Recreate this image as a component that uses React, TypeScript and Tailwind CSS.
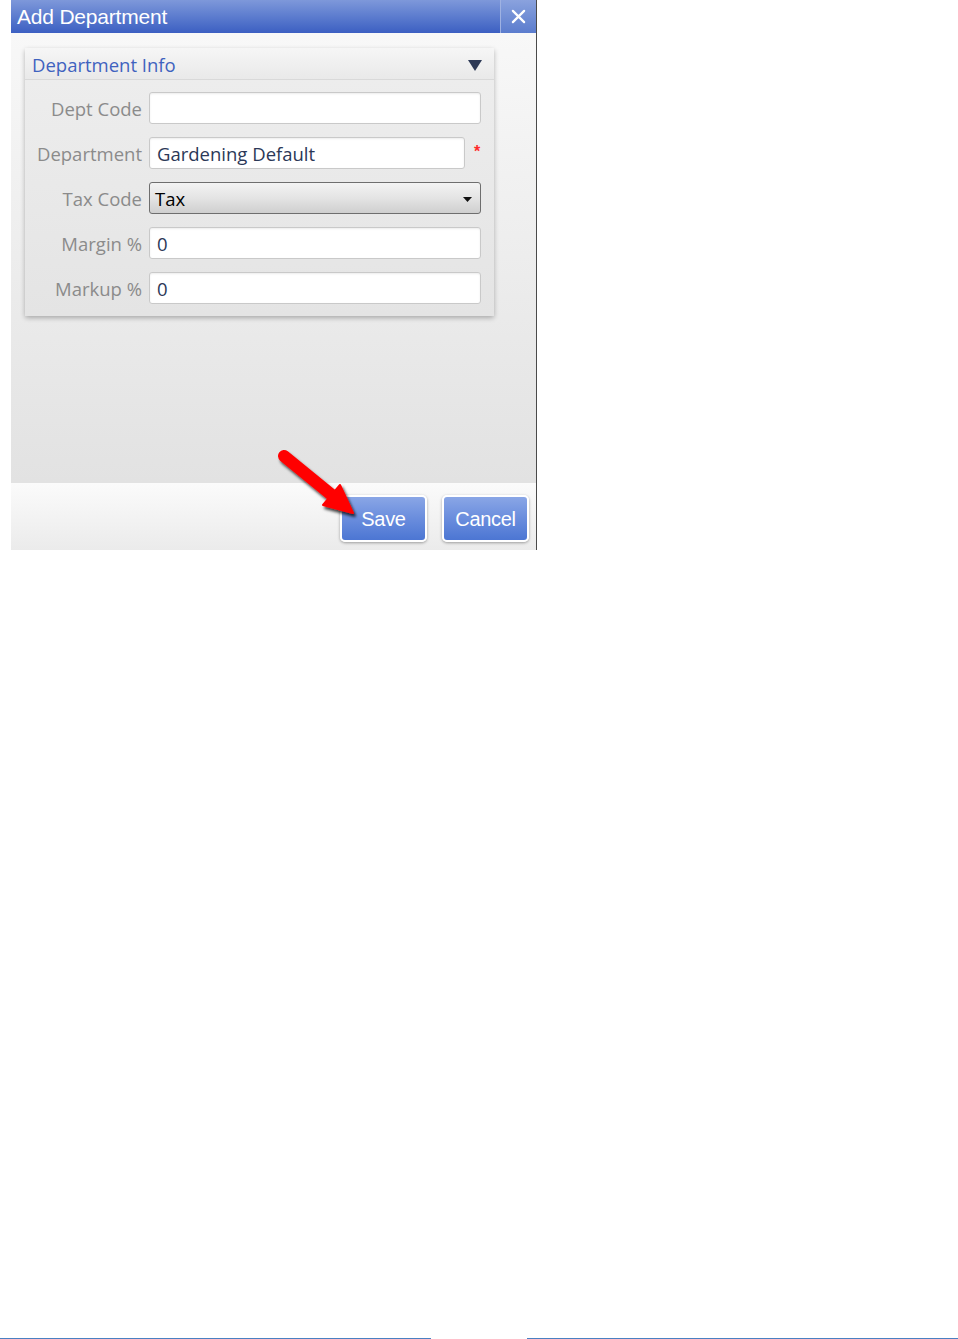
import React from "react";

const sans = { fontFamily: '"Open Sans", "Noto Sans", sans-serif' };
const arial = { fontFamily: '"Liberation Sans", Arial, sans-serif' };

function Row({
  label,
  children,
}: {
  label: string;
  children: React.ReactNode;
}) {
  return (
    <div className="flex items-center h-[32px]">
      <div className="w-[117px] text-right text-[18.5px] text-[#8b8b8b] leading-none whitespace-nowrap pt-[2px]" style={sans}>
        {label}
      </div>
      <div className="ml-[7px] flex items-center flex-1">{children}</div>
    </div>
  );
}

function TextInput({ value, width }: { value: string; width: string }) {
  return (
    <div
      className={`${width} h-[32px] bg-white border border-[#c9c9c9] rounded-[3px] shadow-[inset_0_1px_2px_rgba(0,0,0,0.08)] flex items-center pl-[7px] pt-[2px] text-[18.5px] text-[#2b3857] leading-none`}
      style={sans}
    >
      {value}
    </div>
  );
}

export default function App() {
  return (
    <div className="relative w-[958px] h-[1339px] bg-white flex flex-col">
      <div className="ml-[11px] w-[526px] border-r border-[#4a4a4a] flex flex-col">
        {/* Title bar */}
        <div className="h-[33px] flex bg-gradient-to-b from-[#7e98da] to-[#3c5fc2]">
          <div className="flex-1 flex items-center pl-[6px] text-white text-[21px] leading-none tracking-[-0.2px]" style={arial}>
            Add Department
          </div>
          <div className="w-[1px] bg-[#9fb2e2]" />
          <div className="w-[35px] flex items-center justify-center bg-gradient-to-b from-[#8aa2de] to-[#5b7ccd]">
            <svg width="15" height="15" viewBox="0 0 16 16">
              <path d="M2 2 L14 14 M14 2 L2 14" stroke="white" strokeWidth="2.4" strokeLinecap="round" />
            </svg>
          </div>
        </div>

        {/* Body */}
        <div className="h-[450px] bg-gradient-to-b from-[#f8f8f8] to-[#e2e2e2] pt-[15px] pl-[14px]">
          <div className="w-[469px] shadow-[0_2px_5px_rgba(0,0,0,0.28)] bg-[#e8e8e8] rounded-[2px]">
            <div className="h-[32px] flex items-center justify-between pl-[7px] pr-[12px] pt-[3px] bg-gradient-to-b from-[#f6f6f6] to-[#e9e9e9] border-b border-[#d9d9d9]">
              <span className="text-[18.5px] text-[#3f62bf] leading-none" style={sans}>
                Department Info
              </span>
              <svg width="14" height="11" viewBox="0 0 14 11">
                <path d="M0 0 L14 0 L7 11 Z" fill="#2e3a57" />
              </svg>
            </div>
            <div className="pt-[12px] pb-[12px] pr-[13px] flex flex-col gap-[13px] bg-gradient-to-b from-[#ededed] to-[#e4e4e4]">
              <Row label="Dept Code">
                <TextInput value="" width="w-[332px]" />
              </Row>
              <Row label="Department">
                <TextInput value="Gardening Default" width="w-[316px]" />
                <span className="ml-[9px] -mt-[2px] text-[#ff2a2a] text-[16px] leading-none font-bold" style={arial}>
                  *
                </span>
              </Row>
              <Row label="Tax Code">
                <div
                  className="w-[332px] h-[32px] border border-[#6e6e6e] rounded-[3px] bg-gradient-to-b from-[#f3f3f3] via-[#e4e4e4] to-[#cfcfcf] flex items-center justify-between pl-[5px] pr-[8px] pt-[2px] text-[18.5px] text-black leading-none"
                  style={sans}
                >
                  <span>Tax</span>
                  <svg width="9" height="5" viewBox="0 0 9 5">
                    <path d="M0 0 L9 0 L4.5 5 Z" fill="#111" />
                  </svg>
                </div>
              </Row>
              <Row label="Margin %">
                <TextInput value="0" width="w-[332px]" />
              </Row>
              <Row label="Markup %">
                <TextInput value="0" width="w-[332px]" />
              </Row>
            </div>
          </div>
        </div>

        {/* Footer */}
        <div className="h-[67px] bg-gradient-to-b from-[#fbfbfb] to-[#ebebeb] flex justify-end items-start pt-[12px] pr-[7px] gap-[15px]">
          {["Save", "Cancel"].map((t) => (
            <div
              key={t}
              className="w-[87px] h-[47px] rounded-[5px] border-2 border-white shadow-[0_1px_3px_rgba(0,0,0,0.35)] bg-gradient-to-b from-[#8aa6e6] via-[#6a8ddd] to-[#4c76d3] flex items-center justify-center text-white text-[20px] leading-none tracking-[-0.3px]"
              style={arial}
            >
              {t}
            </div>
          ))}
        </div>
      </div>

      {/* Red arrow annotation */}
      <svg
        className="absolute left-[270px] top-[440px]"
        width="100"
        height="85"
        viewBox="270 440 100 85"
      >
        <defs>
          <filter id="sh" x="-20%" y="-20%" width="150%" height="150%">
            <feDropShadow dx="2" dy="3" stdDeviation="1.6" floodColor="#000" floodOpacity="0.75" />
          </filter>
        </defs>
        <g filter="url(#sh)">
          <line x1="284" y1="456" x2="333" y2="496" stroke="#ff0000" strokeWidth="12" strokeLinecap="round" />
          <path d="M353 513 L323 505 L340 485 Z" fill="#ff0000" stroke="#ff0000" strokeWidth="2" strokeLinejoin="round" />
        </g>
      </svg>

      {/* Bottom lines */}
      <div className="mt-auto flex justify-between h-[1px]">
        <div className="w-[431px] h-[1px] bg-[#4a80c2]" />
        <div className="w-[431px] h-[1px] bg-[#4a80c2]" />
      </div>
    </div>
  );
}
